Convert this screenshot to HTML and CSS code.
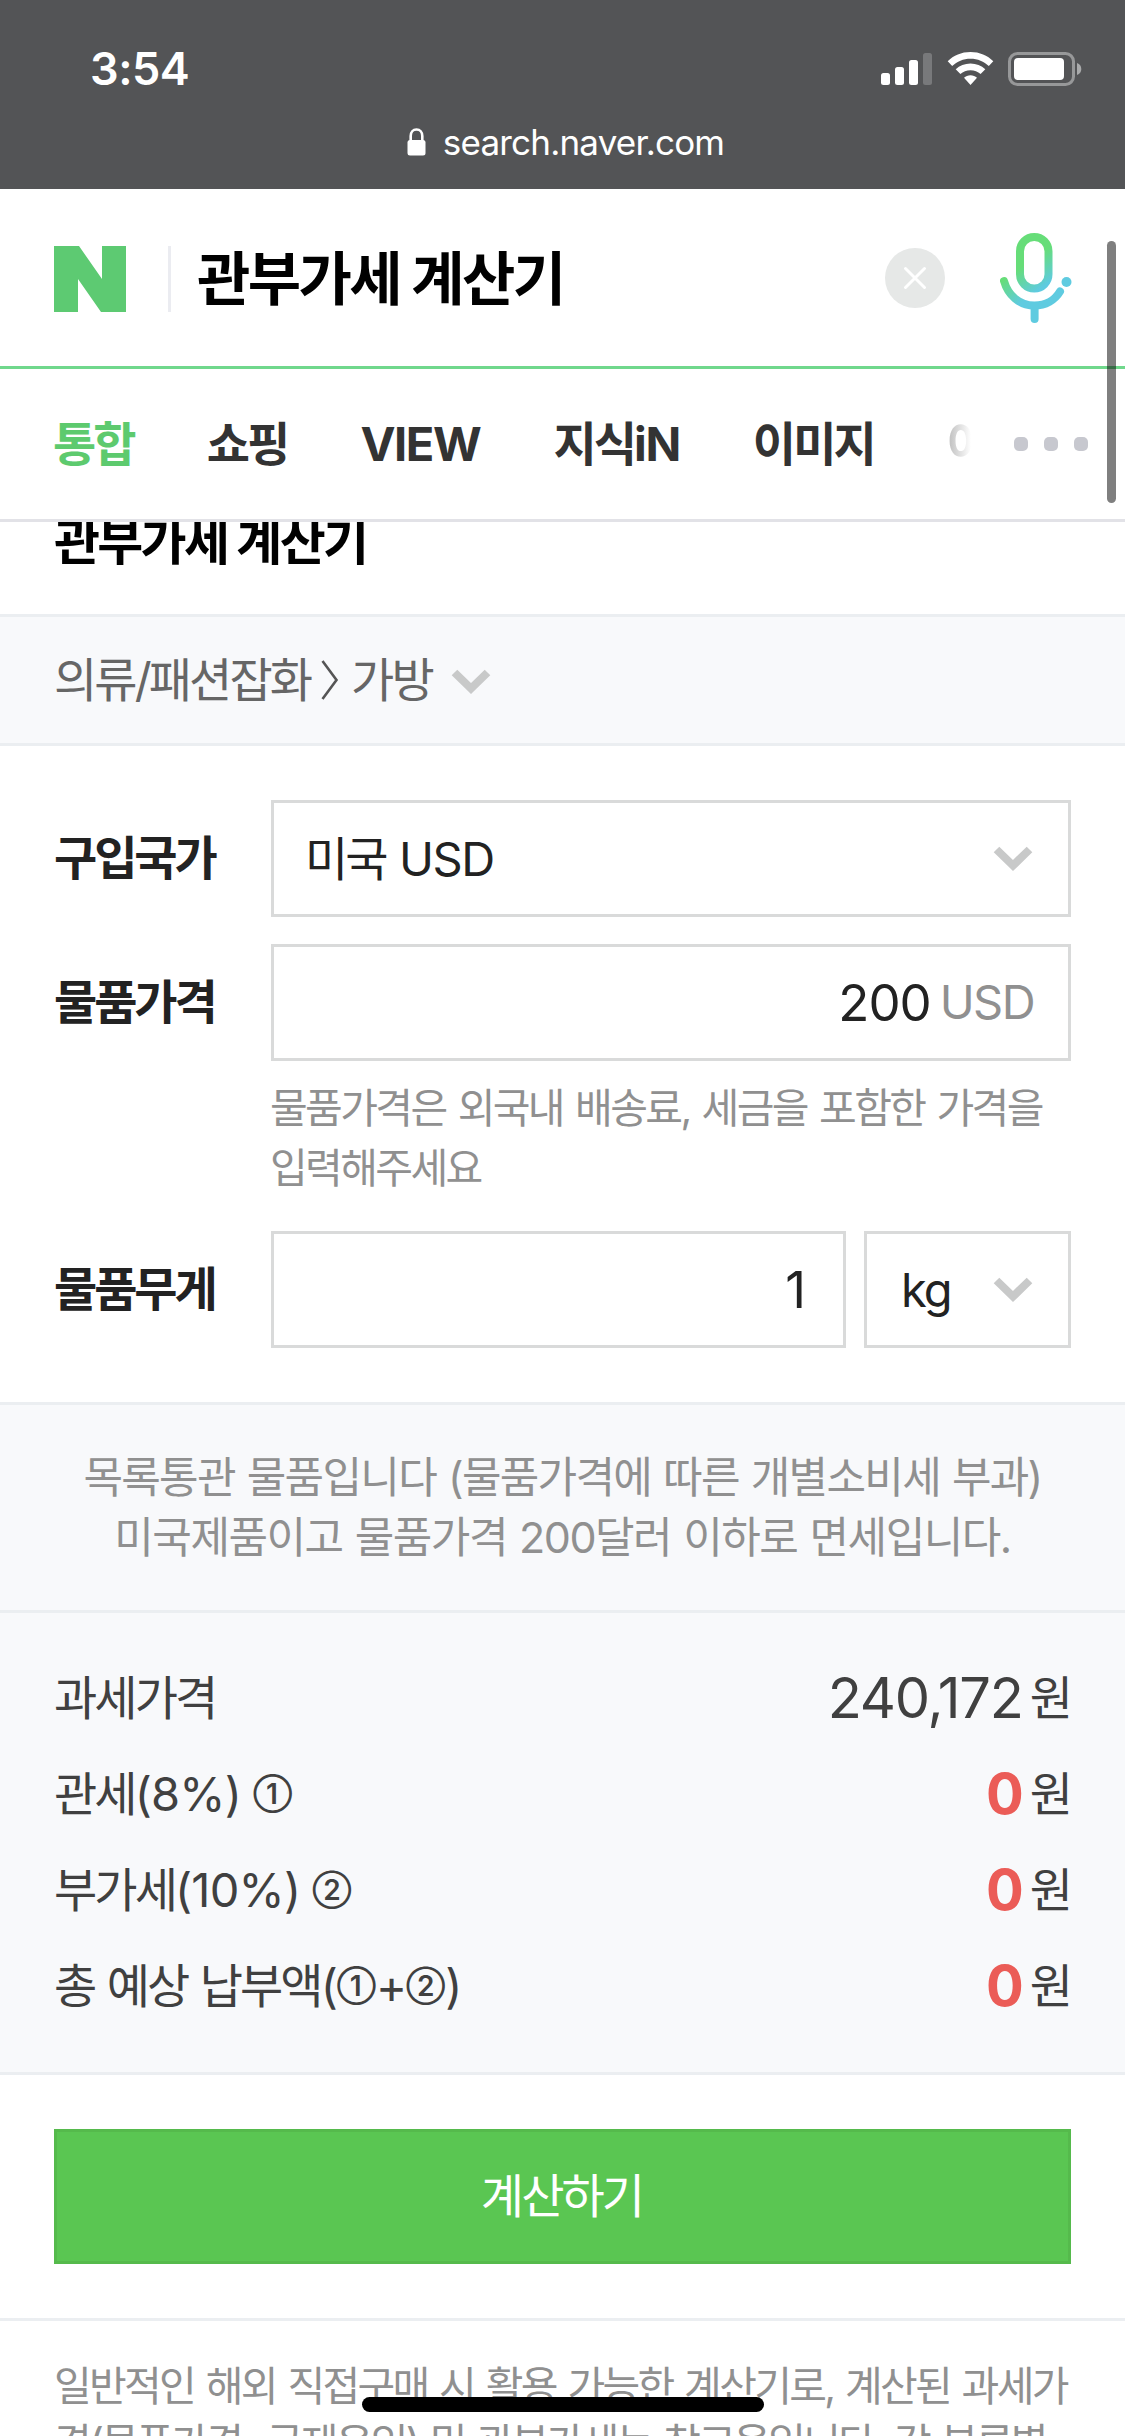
FILE: index.html
```html
<!DOCTYPE html>
<html lang="ko">
<head>
<meta charset="utf-8">
<title>관부가세 계산기</title>
<link rel="stylesheet" href="styles.css">
</head>
<body>
<div class="phone">
  <header class="browser-bar">
    <div class="status">
      <span class="time">3:54</span>
      <svg class="status-icons" width="202" height="36" viewBox="0 0 202 36">
        <g fill="#fff">
          <rect x="0" y="21" width="9" height="12" rx="2.5"/>
          <rect x="14" y="15" width="9" height="18" rx="2.5"/>
          <rect x="28" y="8" width="9" height="25" rx="2.5"/>
          <rect x="42" y="1" width="9" height="32" rx="2.5" opacity=".22"/>
          <path d="M89.500 0C98.500 0 106.500 3.400 112.300 9.200L107.800 14C103 9.400 96.600 6.700 89.500 6.700S76 9.400 71.200 14L66.700 9.200C72.500 3.400 80.500 0 89.500 0Z"/>
          <path d="M89.500 11.500C95.200 11.500 100.400 13.700 104.300 17.300L99.600 22.100C96.900 19.700 93.400 18.200 89.500 18.200S82.100 19.700 79.400 22.100L74.700 17.300C78.600 13.700 83.800 11.500 89.500 11.500Z"/>
          <path d="M89.500 23.200C92 23.200 94.300 24.200 96 25.800L89.500 33L83 25.800C84.700 24.200 87 23.200 89.500 23.200Z"/>
          <rect x="133" y="6" width="50" height="22" rx="4"/>
          <path d="M196 11V23C198.800 22 200.300 19.700 200.300 17S198.800 12 196 11Z" opacity=".5"/>
        </g>
        <rect x="128.500" y="1.500" width="64" height="31" rx="8" fill="none" stroke="#fff" stroke-width="3" opacity=".4"/>
      </svg>
    </div>
    <div class="address">
      <svg width="19" height="28" viewBox="0 0 19 28"><rect x="0.500" y="12" width="18" height="15.500" rx="2.500" fill="#fff"/><path d="M3.700 13V8C3.700 4 6 1.500 9.500 1.500S15.300 4 15.300 8V13" fill="none" stroke="#fff" stroke-width="2.600"/></svg>
      <span>search.naver.com</span>
    </div>
  </header>

  <div class="search">
    <svg class="logo" width="72" height="66" viewBox="0 0 72 66"><path d="M0 0H25L48 33V0H72V66H47L24 33V66H0Z" fill="#5dca72"/></svg>
    <div class="query">관부가세 계산기</div>
    <svg class="clear" width="60" height="60" viewBox="0 0 60 60"><circle cx="30" cy="30" r="30" fill="#e6e8e7"/><path d="M20.500 20.500L39.500 39.500M39.500 20.500L20.500 39.500" stroke="#fff" stroke-width="3" stroke-linecap="round"/></svg>
    <svg class="mic" width="72" height="90" viewBox="0 0 72 90">
      <defs><linearGradient id="mic" gradientUnits="userSpaceOnUse" x1="14" y1="20" x2="40" y2="56"><stop offset="0" stop-color="#66dd78"/><stop offset=".35" stop-color="#66dd78"/><stop offset="1" stop-color="#5fcbe0"/></linearGradient></defs>
      <g fill="none" stroke="url(#mic)" stroke-width="8" stroke-linecap="round">
        <rect x="20" y="4" width="28.500" height="51.500" rx="14.200"/>
        <path d="M4 48C8 62 19 72.500 34.500 72.500C45.500 72.500 55 67 60 58.500"/>
        <path d="M34.600 73V86" stroke="#5fcbe0"/>
      </g>
      <circle cx="66.500" cy="49" r="5" fill="#5fcbe0"/>
    </svg>
  </div>

  <nav class="tabs">
    <span class="tab on">통합</span><span class="tab">쇼핑</span><span class="tab latin">VIEW</span><span class="tab">지식<span class="latin">iN</span></span><span class="tab">이미지</span><span class="tab cut">어</span>
    <span class="more"><i></i><i></i><i></i></span>
  </nav>

  <div class="heading"><h1>관부가세 계산기</h1></div>

  <div class="category">
    <span>의류/패션잡화</span>
    <svg class="sep" width="18" height="40" viewBox="0 0 18 40"><path d="M1.500 1L15.500 20L1.500 39" fill="none" stroke="#555" stroke-width="2.600"/></svg>
    <span>가방</span>
    <svg class="chev" width="40" height="26" viewBox="0 0 40 26"><path d="M3.500 3.500L20 19.500L36.500 3.500" fill="none" stroke="#c8c9c9" stroke-width="8"/></svg>
  </div>

  <form class="form">
    <div class="row">
      <label>구입국가</label>
      <div class="box select"><span>미국 <span class="latin">USD</span></span><svg class="chev" width="40" height="26" viewBox="0 0 40 26"><path d="M3.500 3.500L20 19.500L36.500 3.500" fill="none" stroke="#c8c9c9" stroke-width="8"/></svg></div>
    </div>
    <div class="row price">
      <label>물품가격</label>
      <div class="box amount"><b>200</b><em>USD</em></div>
    </div>
    <p class="hint">물품가격은 외국내 배송료, 세금을 포함한 가격을<br>입력해주세요</p>
    <div class="row">
      <label>물품무게</label>
      <div class="box weight"><b>1</b></div>
      <div class="box unit"><span>kg</span><svg class="chev" width="40" height="26" viewBox="0 0 40 26"><path d="M3.500 3.500L20 19.500L36.500 3.500" fill="none" stroke="#c8c9c9" stroke-width="8"/></svg></div>
    </div>
  </form>

  <p class="notice"><span>목록통관 물품입니다 (물품가격에 따른 개별소비세 부과)</span><br><span class="exempt">미국제품이고 물품가격 200달러 이하로 면세입니다.</span></p>

  <dl class="result">
    <div><dt>과세가격</dt><dd><b class="sum">240,172</b>원</dd></div>
    <div><dt>관세<span class="n">(8%)</span> <span class="c">①</span></dt><dd><b>0</b>원</dd></div>
    <div><dt>부가세<span class="n">(10%)</span> <span class="c">②</span></dt><dd><b>0</b>원</dd></div>
    <div><dt>총 예상 납부액<span class="n">(</span><span class="c">①</span><span class="n">+</span><span class="c">②</span><span class="n">)</span></dt><dd><b>0</b>원</dd></div>
  </dl>

  <div class="action"><button type="button">계산하기</button></div>

  <p class="foot">일반적인 해외 직접구매 시 활용 가능한 계산기로, 계산된 과세가<br>격(물품가격+국제운임) 및 관부가세는 참고용입니다. 각 분류별</p>

  <i class="scrollbar"></i>
  <i class="home"></i>
</div>
</body>
</html>
```
FILE: styles.css
```css
* { box-sizing: border-box; margin: 0; padding: 0; }
body { width: 1125px; height: 2436px; overflow: hidden; background: #fff; }
i, em { font-style: normal; }
svg { flex: none; display: block; }
.phone {
  position: relative;
  width: 1125px;
  height: 2436px;
  overflow: hidden;
  font-family: Inter, "Noto Sans CJK KR", sans-serif;
  font-size: 47px;
  line-height: 58px;
  letter-spacing: -2.9px;
  color: #222;
  white-space: nowrap;
}
.latin { letter-spacing: -1.4px; }

.browser-bar { height: 189px; background: #535456; color: #fff; letter-spacing: 0; }
.status { height: 104px; padding: 34px 42px 0 90px; display: flex; justify-content: space-between; align-items: center; }
.time { font-size: 45px; font-weight: 600; letter-spacing: -.5px; }
.status-icons { margin-top: 2px; }
.address { display: flex; justify-content: center; align-items: center; gap: 17px; padding-left: 6px; height: 75px; font-size: 35px; letter-spacing: -.8px; }

.search { height: 180px; border-bottom: 3px solid #70d88c; display: flex; align-items: center; padding: 2px 0 0 54px; }
.logo { margin-right: 42px; }
.query { flex: 1; height: 66px; line-height: 66px; border-left: 3px solid #ebecf1; padding-left: 26px; font-size: 58px; font-weight: 700; color: #000; letter-spacing: -2.6px; }
.clear { margin: 0 55px 2px 0; }
.mic { margin: 0 53px 2px 0; }

.tabs { height: 153px; border-bottom: 3px solid #e2e2e7; display: flex; align-items: center; padding-left: 53px; font-weight: 700; color: #333; }
.tab { margin-right: 73px; }
.tab.on { color: #5dca6e; }
.cut { width: 24px; margin-right: 43px; overflow: hidden; background: linear-gradient(90deg, #bbb, #fff); -webkit-background-clip: text; background-clip: text; color: transparent; }
.more { display: flex; gap: 16px; }
.more i { width: 14px; height: 14px; border-radius: 5px; background: #c7c8cf; }

.heading { height: 92px; overflow: hidden; padding-left: 54px; }
h1 { font-size: 50px; line-height: 60px; font-weight: 700; letter-spacing: -2.7px; color: #000; margin-top: -10px; }

.category { height: 132px; border: solid #ebeef1; border-width: 3px 0; background: #f8f9fb; display: flex; align-items: center; padding-left: 54px; color: #666; }
.sep { margin: 0 12px 0 11px; }
.category .chev { margin: 4px 0 0 19px; }

.form { height: 656px; padding: 54px 54px 0; }
.row { display: flex; height: 117px; }
.price { margin-top: 27px; }
.row label { width: 217px; line-height: 116px; font-weight: 700; letter-spacing: -3.1px; }
.box { border: 3px solid #d9dada; display: flex; align-items: center; justify-content: flex-end; }
.box b { font-weight: 400; font-size: 51px; letter-spacing: -1px; }
.box em { font-size: 47px; color: #909090; letter-spacing: -1.6px; margin: 0 0 2px 9px; }
.select, .amount { width: 800px; padding: 0 35px 0 31px; word-spacing: 3px; }
.amount { padding-right: 34px; }
.select, .unit { justify-content: space-between; }
.weight { width: 575px; padding-right: 38px; margin-right: 18px; }
.unit { width: 207px; padding: 0 35px 0 34px; letter-spacing: -2px; }
.hint { height: 170px; padding: 17px 0 0 216px; font-size: 41px; line-height: 60px; letter-spacing: -2.6px; word-spacing: 3.1px; color: #909090; }

.notice { height: 208px; border-top: 3px solid #ebeef1; background: #f8f9fb; padding-top: 42px; text-align: center; font-size: 43px; line-height: 60px; letter-spacing: -1.7px; word-spacing: 1.5px; color: #909090; }
.exempt { letter-spacing: -1.5px; }
.result { height: 465px; border: solid #ebeef1; border-width: 3px 0; background: #f8f9fb; padding: 37px 54px 0; color: #404040; }
.result div { height: 96px; display: flex; justify-content: space-between; align-items: center; }
.result dt { word-spacing: 2px; }
.result dd { display: flex; align-items: center; padding-right: 1px; }
.result b { font-size: 56px; color: #eb5c57; margin-right: 7px; letter-spacing: -1px; }
.result .sum { font-weight: 400; color: #404040; letter-spacing: -1.2px; }
.n { letter-spacing: -.8px; }
.c { font-size: 28px; font-weight: 600; line-height: 1; letter-spacing: 0; vertical-align: 7px; }

.action { height: 243px; padding: 54px 54px 0; }
button { display: block; width: 1017px; height: 135px; padding: 0 2px 2px 0; border: 3px solid #55ba4c; background: #5ac652; color: #fff; font: inherit; letter-spacing: inherit; }
.foot { border-top: 3px solid #ebeef1; padding: 37px 54px 0; font-size: 41px; line-height: 57px; letter-spacing: -2.7px; word-spacing: 2.8px; color: #909090; }

.scrollbar { position: absolute; left: 1107px; top: 241px; width: 9px; height: 262px; border-radius: 5px; background: rgba(0,0,0,.5); }
.home { position: absolute; left: 362px; top: 2397px; width: 402px; height: 15px; border-radius: 8px; background: #000; }
```
